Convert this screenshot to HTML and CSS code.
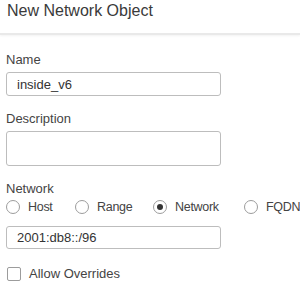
FILE: index.html
```html
<!DOCTYPE html>
<html>
<head>
    <title>New Network Object</title>
    <link rel="stylesheet" href="styles.css">
</head>
<body>
    <div class="dialog-header">New Network Object</div>

    <form class="object-form">
        <div class="field">
            <label class="field-label" for="name">Name</label>
            <input class="text-input" type="text" id="name" value="inside_v6">
        </div>

        <div class="field">
            <label class="field-label" for="description">Description</label>
            <textarea class="text-input text-area" id="description"></textarea>
        </div>

        <div class="field field-network">
            <span class="field-label">Network</span>
            <div class="radio-row">
                <span class="radio-item"><span class="radio"></span>Host</span>
                <span class="radio-item"><span class="radio"></span>Range</span>
                <span class="radio-item"><span class="radio checked"></span>Network</span>
                <span class="radio-item"><span class="radio"></span>FQDN</span>
            </div>
            <input class="text-input network-input" type="text" value="2001:db8::/96">
        </div>

        <!-- override checkbox -->
        <div class="check-row">
            <span class="checkbox"></span>Allow Overrides
        </div>
    </form>
</body>
</html>
```

FILE: styles.css
```css
body {
    margin: 0;
    width: 300px;
    height: 286px;
    background: #fff;
    font-family: "Liberation Sans", Arial, sans-serif;
    color: #444;
    overflow: hidden;
}

.dialog-header {
    box-sizing: border-box;
    height: 35px;
    padding: 2px 7px 0;
    font-size: 16px;
    line-height: 18px;
    color: #3a3a3a;
    border-bottom: 2px solid #e9e9e9;
    box-shadow: 0 1px 2px #f2f2f2;
}

.object-form {
    padding: 17px 6px 0;
}

.field {
    margin-bottom: 15px;
}

.field-label {
    display: block;
    font-size: 13px;
    line-height: 15px;
    margin-bottom: 5px;
    color: #444;
}

.text-input {
    display: block;
    box-sizing: border-box;
    width: 215px;
    height: 24px;
    margin: 0;
    padding: 0 10px;
    border: 1px solid #bdbdbd;
    border-radius: 3px;
    font-family: "Liberation Sans", Arial, sans-serif;
    font-size: 13px;
    color: #333;
    background: #fff;
}

.text-area {
    height: 35px;
    resize: none;
}

.field-network {
    margin-bottom: 17px;
}

.field-network .field-label {
    margin-bottom: 3px;
}

.radio-row {
    display: grid;
    grid-template-columns: 69px 78px 91px auto;
    height: 16px;
    align-items: center;
    font-size: 12.5px;
    letter-spacing: -0.3px;
    color: #444;
    margin-bottom: 11px;
}

.radio-item {
    display: flex;
    align-items: center;
    gap: 8px;
    white-space: nowrap;
}

.radio {
    box-sizing: border-box;
    flex: none;
    width: 14px;
    height: 14px;
    border: 1px solid #9c9c9c;
    border-radius: 50%;
    display: flex;
    align-items: center;
    justify-content: center;
}

.radio.checked::after {
    content: "";
    width: 6px;
    height: 6px;
    border-radius: 50%;
    background: #333;
}

.network-input {
    height: 23px;
}

.check-row {
    display: flex;
    align-items: center;
    gap: 8px;
    padding-left: 1px;
    font-size: 13px;
    color: #444;
}

.checkbox {
    box-sizing: border-box;
    width: 14px;
    height: 14px;
    border: 1px solid #9c9c9c;
    border-radius: 2px;
}
```
